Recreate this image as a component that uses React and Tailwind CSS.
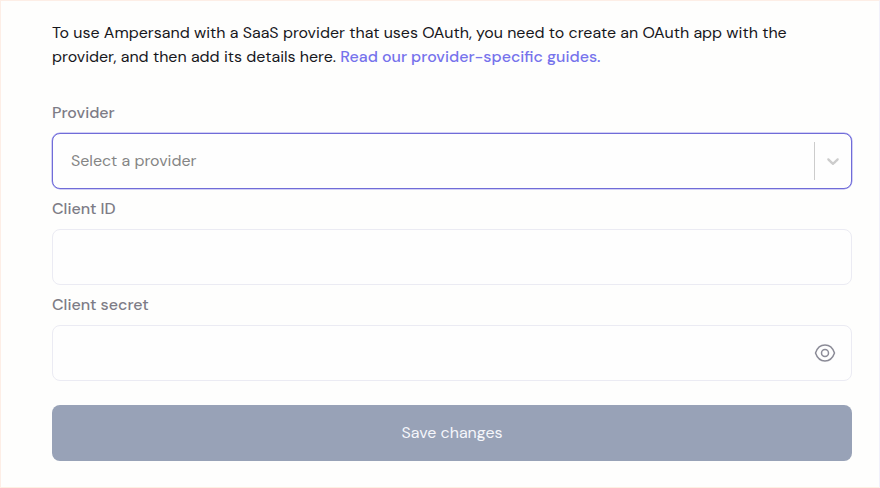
const font = "font-['DM_Sans','Inter','Liberation_Sans',sans-serif]";

function Label({ htmlFor, className, children }) {
  return (
    <label htmlFor={htmlFor} className={`block w-fit h-6 text-base font-medium whitespace-nowrap text-[#7d7c86] ${className}`}>
      {children}
    </label>
  );
}

function ChevronDown() {
  return (
    <svg width="20" height="20" viewBox="0 0 20 20" fill="#cccccc" aria-hidden="true">
      <path d="M4.516 7.548c0.436-0.446 1.043-0.481 1.576 0l3.908 3.747 3.908-3.747c0.533-0.481 1.141-0.446 1.574 0 0.436 0.445 0.408 1.197 0 1.615-0.406 0.418-4.695 4.502-4.695 4.502-0.217 0.223-0.502 0.335-0.787 0.335s-0.57-0.112-0.789-0.335c0 0-4.287-4.084-4.695-4.502s-0.436-1.17 0-1.615z" />
    </svg>
  );
}

function Eye() {
  return (
    <svg width="22" height="18" viewBox="0 0 22 18" fill="none" stroke="#8b8b97" strokeWidth="1.5" aria-hidden="true">
      <path d="M1.5 9C3.2 4 6.7 1.1 11 1.1S18.8 4 20.5 9C18.8 14 15.3 16.9 11 16.9S3.2 14 1.5 9Z" strokeLinejoin="round" />
      <circle cx="11" cy="9" r="3.5" />
    </svg>
  );
}

export default function App() {
  return (
    <main className={`h-[488px] w-[880px] border border-t-[#fdeee6] border-r-[#f1f0fb] border-b-[#fdf0e2] border-l-[#fdeee6] bg-[#fefefd] pt-5 pr-[27px] pl-[51px] ${font}`}>
      <p className="text-base whitespace-nowrap text-[#17171c]">
        To use Ampersand with a SaaS provider that uses OAuth, you need to create an OAuth app with the
        <br />
        provider, and then add its details here.{" "}
        <a href="#guides" className="font-medium text-[#7673ec]">Read our provider-specific guides.</a>
      </p>

      <Label htmlFor="provider" className="mt-8">Provider</Label>
      <button id="provider" className="mt-2 flex h-14 w-full items-center rounded-lg border border-[#706cd8] bg-[#fefefe] pl-[18px] text-left shadow-[0_0_0_0.5px_#a5a2ee]">
        <span className="flex-1 text-base text-[#858585]">Select a provider</span>
        <span className="h-[38px] w-px bg-[#cccccc]" />
        <span className="flex w-9 justify-center"><ChevronDown /></span>
      </button>

      <Label htmlFor="client-id" className="mt-2">Client ID</Label>
      <input id="client-id" className="mt-2 block h-14 w-full rounded-lg border border-[#ebebf3] bg-[#fefefe] px-4 outline-none" />

      <Label htmlFor="client-secret" className="mt-2">Client secret</Label>
      <div className="mt-2 flex h-14 items-center rounded-lg border border-[#ebebf3] bg-[#fefefe] pr-[15px]">
        <input id="client-secret" type="password" className="min-w-0 flex-1 px-4 outline-none" />
        <button aria-label="Show secret"><Eye /></button>
      </div>

      <button className="mt-6 h-14 w-full rounded-lg bg-[#98a2b7] text-base text-[#f5f6fb]">Save changes</button>
    </main>
  );
}
